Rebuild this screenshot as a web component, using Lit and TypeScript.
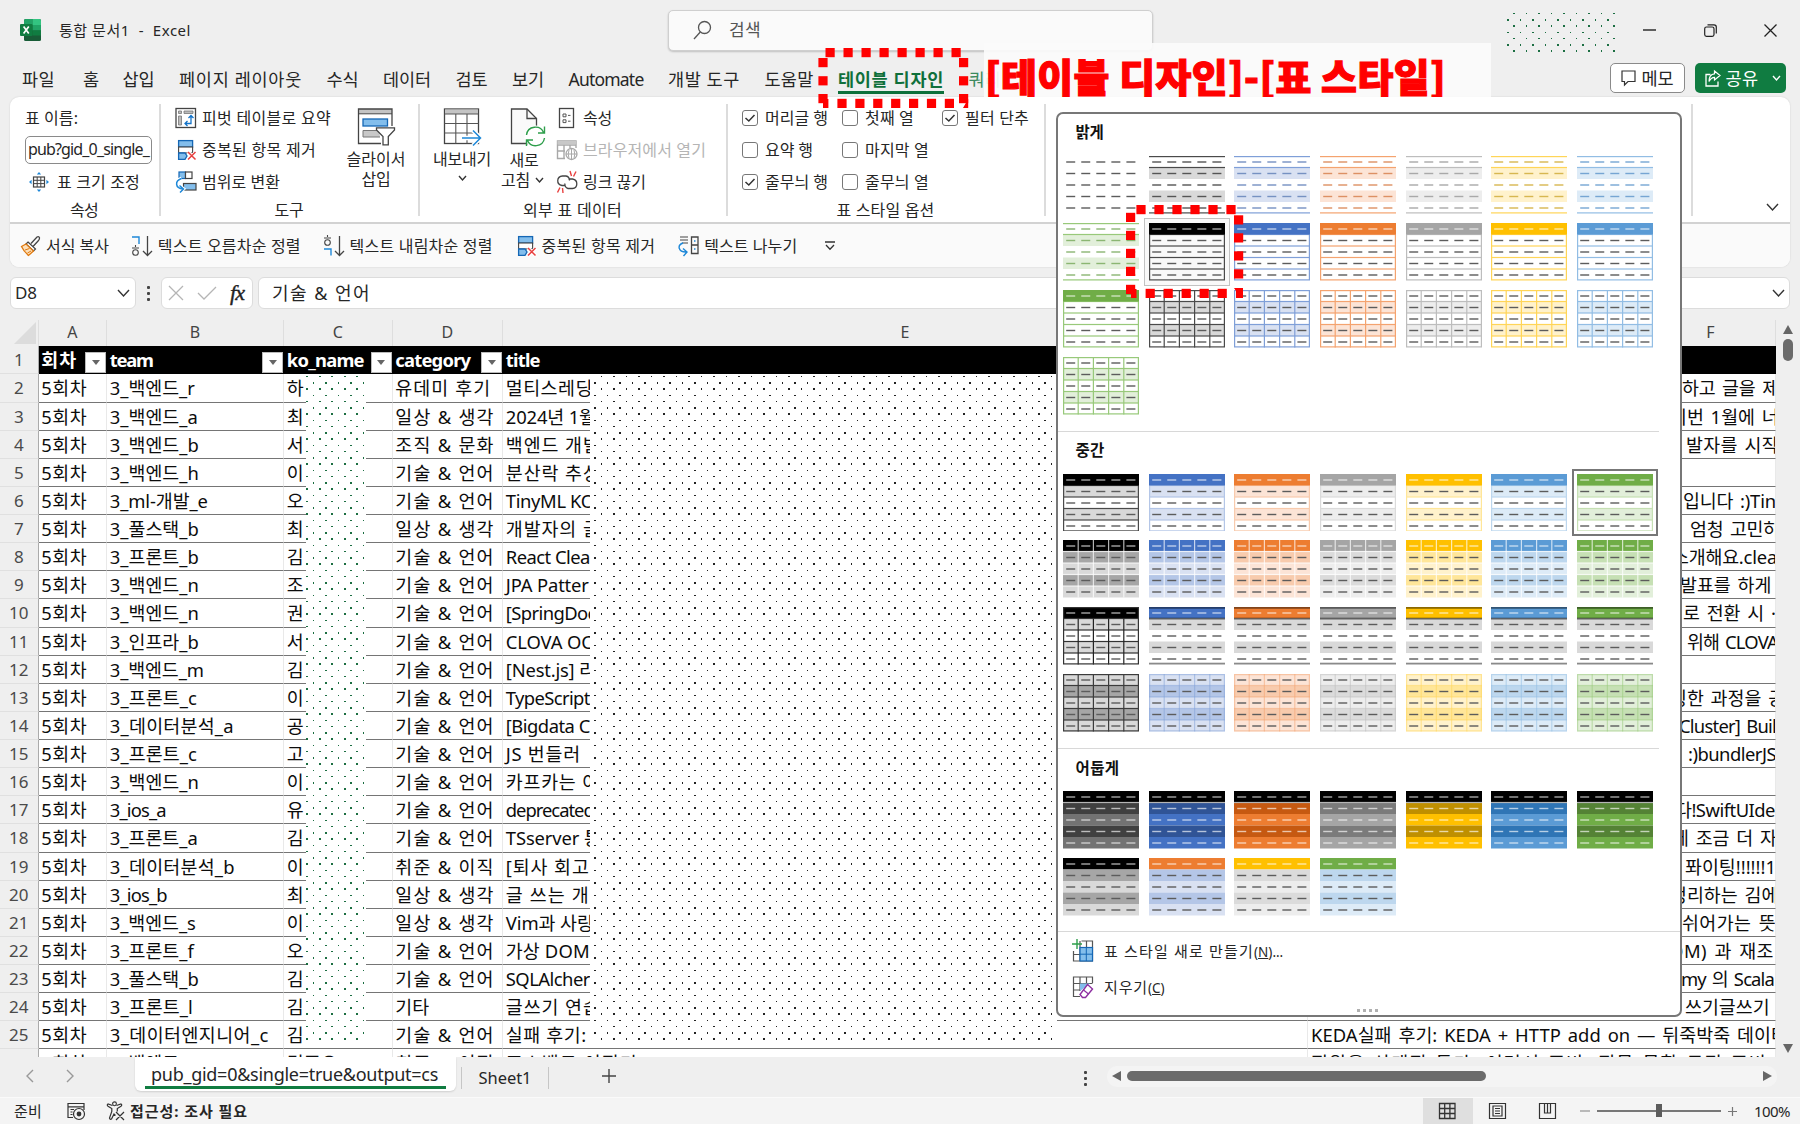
import { LitElement, html, svg, css, nothing } from "lit";
import { customElement } from "lit/decorators.js";
import { styleMap } from "lit/directives/style-map.js";

/* ---------- text helper: a span tracked to a given pixel width ---------- */
const t = (text: string, w = 0, cls = "") =>
  html`<span class="fit ${cls}" data-w=${w}>${text}</span>`;

/* ---------- sheet data ---------- */
type Row = [string, number, string, string, number, string, number, string, number, number?];
// team, width, name, category, width, title, width, overflow text, left edge, overflow width
const ROWS: Row[] = [
  ["3_백엔드_r", 85, "하", "유데미 후기", 96, "멀티스레딩", 87, "하고 글을 제", 1682, 97],
  ["3_백엔드_a", 88, "최", "일상 & 생각", 99.5, "2024년 1월", 90, "이번 1월에 너", 1670],
  ["3_백엔드_b", 89, "서", "조직 & 문화", 99.5, "백엔드 개발", 95, "발자를 시작", 1686, 93],
  ["3_백엔드_h", 89, "이", "기술 & 언어", 99.5, "분산락 추상", 95, "", 0],
  ["3_ml-개발_e", 98, "오", "기술 & 언어", 99.5, "TinyML KO", 89, "입니다 :)Tin", 1683, 93],
  ["3_풀스택_b", 89, "최", "일상 & 생각", 99.5, "개발자의 글", 95, "엄청 고민하", 1690, 90],
  ["3_프론트_b", 89, "김", "기술 & 언어", 99.5, "React Clea", 84, "소개해요.clea", 1672, 105],
  ["3_백엔드_n", 89, "조", "기술 & 언어", 99.5, "JPA Patter", 83, "발표를 하게", 1680],
  ["3_백엔드_n", 89, "권", "기술 & 언어", 99.5, "[SpringDoc", 90, "로 전환 시 ·", 1683],
  ["3_인프라_b", 89, "서", "기술 & 언어", 99.5, "CLOVA OC", 87, "위해 CLOVA", 1687, 91],
  ["3_백엔드_m", 94, "김", "기술 & 언어", 99.5, "[Nest.js] 리", 90, "", 0],
  ["3_프론트_c", 87, "이", "기술 & 언어", 99.5, "TypeScript", 84, "팅한 과정을 공", 1670],
  ["3_데이터분석_a", 124, "공", "기술 & 언어", 99.5, "[Bigdata C", 84, "Cluster] Buil", 1679, 97],
  ["3_프론트_c", 87, "고", "기술 & 언어", 99.5, "JS 번들러", 75, ":)bundlerJS", 1688, 88],
  ["3_백엔드_n", 89, "이", "기술 & 언어", 99.5, "카프카는 이", 94, "", 0],
  ["3_ios_a", 56, "유", "기술 & 언어", 99.5, "deprecated", 88, "다!SwiftUIde", 1675, 100],
  ["3_프론트_a", 88, "김", "기술 & 언어", 99.5, "TSserver 통", 95, "에 조금 더 자", 1672],
  ["3_데이터분석_b", 125, "이", "취준 & 이직", 99.5, "[퇴사 회고", 84, "퐈이팅!!!!!!1", 1685, 91],
  ["3_ios_b", 57, "최", "일상 & 생각", 99.5, "글 쓰는 개", 84, "정리하는 김에", 1670],
  ["3_백엔드_s", 86, "이", "일상 & 생각", 99.5, "Vim과 사랑", 88, "쉬어가는 뜻", 1682, 94],
  ["3_프론트_f", 84, "오", "기술 & 언어", 99.5, "가상 DOM", 84, "OM) 과 재조", 1669, 105],
  ["3_풀스택_b", 89, "김", "기술 & 언어", 99.5, "SQLAlcher", 84, "my 의 Scala", 1681, 93],
  ["3_프론트_l", 83, "김", "기타", 34, "글쓰기 연습", 95, "쓰기글쓰기", 1685],
  ["3_데이터엔지니어_c", 159, "김", "기술 & 언어", 99.5, "실패 후기:", 81, "KEDA실패 후기: KEDA + HTTP add on — 뒤죽박죽 데이터", 1311, 477],
  ["3_백엔드_r", 85, "김준오", "취준 & 이직", 99.5, "포스백드 이직기", 132, "직원을 상태집 특가, 이러서 준비, 직문 문학 긍정 준비,", 1311, 462],
];

/* ---------- table style thumbnails ---------- */
interface Thumb {
  kind: "plain" | "band" | "head" | "grid" | "midA" | "midB" | "midC" | "midD" | "dark" | "duo";
  c: string;   // accent
  l: string;   // line
  t1: string;  // light tint
  t2: string;  // stronger tint
  d: string;   // dash / deep shade
}
const BLACK = { c: "#000000", l: "#4a4a4a", t1: "#d9d9d9", t2: "#a6a6a6", d: "#555555" };
const BLUE = { c: "#4472c4", l: "#7f9fd8", t1: "#d9e1f2", t2: "#b4c6e7", d: "#7691c2" };
const ORANGE = { c: "#ed7d31", l: "#f4a36f", t1: "#fce4d6", t2: "#f8cbad", d: "#dd9063" };
const GRAY = { c: "#a5a5a5", l: "#bdbdbd", t1: "#ededed", t2: "#dbdbdb", d: "#a9a9a9" };
const GOLD = { c: "#ffc000", l: "#ffd558", t1: "#fff2cc", t2: "#ffe699", d: "#d7b750" };
const SKY = { c: "#5b9bd5", l: "#92bde4", t1: "#ddebf7", t2: "#bdd7ee", d: "#76a5d3" };
const GREEN = { c: "#70ad47", l: "#98c97a", t1: "#e2efda", t2: "#c6e0b4", d: "#8bb672" };
const ALL = [BLACK, BLUE, ORANGE, GRAY, GOLD, SKY, GREEN];
const DEEP = ["#404040", "#305496", "#c65911", "#7b7b7b", "#bf8f00", "#2f75b5", "#548235"];
const mk = (kind: Thumb["kind"], list: any[]): Thumb[] => list.map((p) => ({ kind, ...p }));

const LIGHT: Thumb[] = [
  { kind: "plain", ...BLACK }, ...mk("band", ALL), ...mk("head", ALL), ...mk("grid", ALL),
];
const MEDIUM: Thumb[] = [...mk("midA", ALL), ...mk("midB", ALL), ...mk("midC", ALL), ...mk("midD", ALL)];
const DARK: Thumb[] = [
  ...ALL.map((p, i) => ({ kind: "dark" as const, ...p, c: i ? p.c : "#737373", d: DEEP[i] })),
  { kind: "duo", ...BLACK }, { kind: "duo", ...BLUE, c: ORANGE.c }, { kind: "duo", ...GRAY, c: GOLD.c },
  { kind: "duo", ...SKY, c: GREEN.c },
];

const W = 76, H = 57.5, B = 11.5;
const rows = [0, 1, 2, 3, 4];
const band = (i: number, fill: string) => svg`<rect x="0" y=${i * B} width=${W} height=${B} fill=${fill} />`;
const hl = (y: number, s: string, w = 1.2) => svg`<rect x="0" y=${y - w / 2} width=${W} height=${w} fill=${s} />`;
const vl = (x: number, s: string, from = 0, w = 1.2) =>
  svg`<rect x=${x - w / 2} y=${from} width=${w} height=${H - from} fill=${s} />`;
const frame = (s: string) => svg`<rect x=".6" y=".6" width=${W - 1.2} height=${H - 1.2} fill="none" stroke=${s} stroke-width="1.2" />`;
const dash = (i: number, s: string) =>
  rows.map((k) => svg`<rect x=${3.2 + k * 15.05} y=${i * B + 5.3} width="9" height="1.4" fill=${s} />`);
const cuts = [15.2, 30.4, 45.6, 60.8];

function drawThumb(p: Thumb) {
  const D = "#5c5c5c", WH = "rgba(255,255,255,.65)", black = p.c === "#000000";
  switch (p.kind) {
    case "plain":
      return rows.map((i) => dash(i, D));
    case "band":
      return [band(1, p.t1), band(3, p.t1), hl(0.6, p.l), hl(B, p.l), hl(H - 0.6, p.l), rows.map((i) => dash(i, p.d))];
    case "head":
      return [band(0, p.c), [1, 2, 3, 4].map((i) => hl(i * B, p.l)), frame(p.l), band(0, p.c), dash(0, WH),
        [1, 2, 3, 4].map((i) => dash(i, D))];
    case "grid":
      return [band(1, p.t1), band(3, p.t1), [1, 2, 3, 4].map((i) => hl(i * B, p.l)), cuts.map((x) => vl(x, p.l)), frame(p.l),
        rows.map((i) => dash(i, D))];
    case "midA": {
      const l = black ? p.l : p.t2;
      return [band(1, p.t1), band(3, p.t1), [1, 2, 3, 4].map((i) => hl(i * B, l)), frame(l), band(0, p.c), dash(0, WH),
        [1, 2, 3, 4].map((i) => dash(i, D))];
    }
    case "midB":
      return [band(0, p.c), band(1, p.t2), band(2, p.t1), band(3, p.t2), band(4, p.t1),
        [1, 2, 3, 4].map((i) => hl(i * B, "rgba(255,255,255,.75)")), cuts.map((x) => vl(x, "rgba(255,255,255,.7)")),
        dash(0, WH), [1, 2, 3, 4].map((i) => dash(i, D))];
    case "midC":
      return [band(0, p.c), band(1, "#d9d9d9"), band(3, "#d9d9d9"),
        black ? [[1, 2, 3, 4].map((i) => hl(i * B, "#333")), cuts.map((x) => vl(x, "#222", B)), frame("#333")]
          : [hl(0.9, "rgba(0,0,0,.45)", 1.8), hl(B + 0.1, "rgba(0,0,0,.55)", 1.8), hl(H - 0.9, "#8a8a8a", 1.8)],
        dash(0, WH), [1, 2, 3, 4].map((i) => dash(i, D))];
    case "midD": {
      const l = black ? "#3c3c3c" : p.l + "80";
      return [band(0, p.t1), band(1, p.t2), band(2, p.t1), band(3, p.t2), band(4, p.t1),
        [1, 2, 3, 4].map((i) => hl(i * B, l)), cuts.map((x) => vl(x, l)), frame(l), rows.map((i) => dash(i, D))];
    }
    case "dark":
      return [band(1, p.d), band(2, p.c), band(3, p.d), band(4, p.c), band(0, "#000"), hl(B, "#b5b5b5"),
        rows.map((i) => dash(i, WH))];
    case "duo":
      return [band(0, p.c), band(1, p.t2), band(2, p.t1), band(3, p.t2), band(4, p.t1), dash(0, WH),
        [1, 2, 3, 4].map((i) => dash(i, D))];
  }
}

/* ---------- icons ---------- */
const ico = (w: number, h: number, body: unknown) =>
  html`<svg class="ico" width=${w} height=${h} viewBox="0 0 ${w} ${h}" fill="none">${body}</svg>`;
const chev = (w = 12, h = 7, c = "#333", sw = 1.4) =>
  ico(w, h, svg`<path d="M1 1L${w / 2} ${h - 1}L${w - 1} 1" stroke=${c} stroke-width=${sw} />`);

const I = {
  excel: ico(21, 22, svg`<rect x="4" y="0" width="17" height="22" rx="1.5" fill="#185c37"/><path d="M4 1.500Q4 0 5.500 0H12.500V6H4z" fill="#21a366"/><path d="M12.500 0H19.500Q21 0 21 1.500V6H12.500z" fill="#33c481"/><rect x="4" y="6" width="8.500" height="5.500" fill="#107c41"/><rect x="12.500" y="6" width="8.500" height="5.500" fill="#21a366"/><rect x="12.500" y="11.500" width="8.500" height="5" fill="#107c41"/><rect x="0" y="5" width="12.500" height="12" rx="1" fill="#107c41"/><path d="M3.600 7.500L8.800 14.500M8.800 7.500L3.600 14.500" stroke="#fff" stroke-width="1.700"/>`),
  search: ico(19, 20, svg`<circle cx="11.500" cy="7.500" r="6" stroke="#555" stroke-width="1.300"/><path d="M7.300 12L1 19" stroke="#555" stroke-width="1.300"/>`),
  resize: ico(20, 20, svg`<rect x="4.500" y="5" width="11" height="10" stroke="#444" stroke-width="1.200"/><path d="M4.500 8.300H15.500M4.500 11.600H15.500M8.200 5V15M11.800 5V15" stroke="#444"/><path d="M10 0L12.200 2.600H7.800zM10 20L12.200 17.400H7.800zM0 10L2.600 7.800V12.200zM20 10L17.400 7.800V12.200z" fill="#1e88d8"/>`),
  pivot: ico(22, 22, svg`<rect x="1" y="1.500" width="19.500" height="19" stroke="#444" stroke-width="1.300"/><path d="M3.500 4H6.500V6.500H3.500zM9 4H18V6.500H9zM3.500 9H6.500V18H3.500z" fill="#bbb" stroke="#777" stroke-width=".8"/><path d="M16 9V16.500H10.500M13.500 11L16 8.500L18.500 11M12.500 14L10 16.500L12.500 19" stroke="#1473c8" stroke-width="1.300"/>`),
  dedupe: ico(22, 22, svg`<rect x="3.600" y="1.600" width="14" height="6.500" fill="#83beec" stroke="#1567b5" stroke-width="1.300"/><rect x="3.600" y="8" width="14" height="6" fill="#fff" stroke="#444" stroke-width="1.100"/><path d="M3.600 14H10L12 17L10 20.400H3.600z" fill="#83beec" stroke="#1567b5" stroke-width="1.300"/><path d="M13 13L21 20.800M21 13L13 20.800" stroke="#fff" stroke-width="3.500"/><path d="M13 13L20.500 20.500M20.500 13L13 20.500" stroke="#e8403f" stroke-width="1.500"/>`),
  range: ico(22, 22, svg`<rect x="4" y="1" width="6.500" height="6.500" fill="#83beec" stroke="#1567b5" stroke-width="1.200"/><rect x="10.500" y="1" width="6.500" height="6.500" fill="#fff" stroke="#444" stroke-width="1.200"/><rect x="8.500" y="12.500" width="12.500" height="6.500" fill="#83beec" stroke="#444" stroke-width="1.200"/><path d="M6.500 7.500C0 10 0 16.500 7 18M4 14.500L8.500 18L5 21.500" stroke="#fff" stroke-width="3.500"/><path d="M6.500 7.500C-.5 10 0 17 8 18M4.500 14.500L8.500 18L5 21.500" stroke="#1e88d8" stroke-width="1.500"/>`),
  slicer: ico(39, 39, svg`<path d="M1.500 2H35V37H1.500z" fill="#fff"/><rect x="1.500" y="2" width="33.500" height="4.500" fill="#c4c4c4"/><path d="M35 19V2H1.500V36.500H24" stroke="#444" stroke-width="1.300"/><path d="M1.500 6.800H35" stroke="#444"/><rect x="6" y="12" width="24.500" height="7" fill="#83beec" stroke="#1567b5" stroke-width="1.300"/><path d="M22 23.500H6V30H23" fill="#c8c8c8" stroke="#777"/><path d="M19.500 20.800H37.500V23L31.300 29.500V37.800H26V29.500L19.500 23z" fill="#fff" stroke="#444" stroke-width="1.300"/>`),
  exportT: ico(39, 39, svg`<rect x="1.500" y="2" width="34" height="34.500" fill="#fff" stroke="#444" stroke-width="1.300"/><rect x="2" y="2.500" width="33" height="4.500" fill="#c4c4c4"/><path d="M1.500 7H35.500M1.500 16.500H35.500M1.500 26H35.500M12.800 7V36.500M24 7V36.500" stroke="#555" stroke-width="1.100"/><path d="M19 31H37M30 23.500L37.500 31L30 38.500" stroke="#fff" stroke-width="4.500"/><path d="M19 31H37M30 23.500L37.500 31L30 38.500" stroke="#1e88d8" stroke-width="1.500"/>`),
  refresh: ico(36, 39, svg`<path d="M1.500 2H17L26.500 11.500V36.500H1.500z" fill="#fafafa" stroke="#444" stroke-width="1.300"/><path d="M17 2V11.500H26.500" stroke="#444" stroke-width="1.300"/><circle cx="25.500" cy="29.500" r="11" fill="#fff"/><path d="M16.500 28C17.500 18.500 30.500 17.500 33.500 25.500M34.500 19.500V26H28M34.500 31C33 40.500 20.500 41 17.500 33.500M16.500 39V33H23" stroke="#2e9e4b" stroke-width="1.400"/>`),
  props: ico(22, 22, svg`<rect x="3.500" y="1.500" width="14" height="19" stroke="#444" stroke-width="1.300"/><path d="M7 7H10V9.800H7zM7 12.800H10V15.600H7zM12 8.400H14.500M12 14.200H14.500" stroke="#555"/>`),
  browser: ico(22, 22, svg`<path d="M9 19.500H1.500V2H20V9M1.500 6H20M1.500 12H9M8 6V19.500M14 6V9" stroke="#a8a8a8" stroke-width="1.400"/><rect x="1.500" y="2" width="18.500" height="3.500" fill="#c8c8c8"/><circle cx="15.500" cy="15" r="5.500" fill="#fff" stroke="#a8a8a8" stroke-width="1.300"/><path d="M10 15H21M15.500 9.500V20.500M13 11Q11.500 15 13 19.500M18 11Q19.500 15 18 19.500" stroke="#a8a8a8"/>`),
  unlink: ico(22, 24, svg`<path d="M9 15.500H6C0 14.500 .5 6.500 6.500 6H10C12.500 6.500 13.500 8 13.500 10.500M12.500 9H16.500C22.500 10 22 18 16.500 18.500H12C9.500 18 8.500 15.500 9 13.500" stroke="#444" stroke-width="1.300"/><path d="M14 1L15.500 6M20 1.500L17.500 6.500M4 17.500L1.500 22.500M6.500 18L7 23" stroke="#e8403f" stroke-width="1.400"/>`),
  brush: ico(22, 22, svg`<path d="M11 8.500L17 2Q19 1 19.500 3Q19.500 4.500 18.500 5.500L13 11.500" stroke="#444" stroke-width="1.300"/><path d="M8 7L15.500 14L13.500 16L6 9z" fill="#fff" stroke="#444" stroke-width="1.200"/><path d="M6 9L1.500 11.500Q3.500 16 8.500 20.500L13.500 16z" fill="#fce0bb" stroke="#e07a10" stroke-width="1.300"/><path d="M5 15L9.500 13.500M7.500 18L11 16" stroke="#e07a10"/>`),
  asc: ico(22, 22, svg`<path d="M0 2H7V9" stroke="#1e88d8" stroke-width="1.400"/><path d="M3.500 10V12M0 13H7" stroke="#444" stroke-width="1.100"/><circle cx="3.500" cy="17.500" r="2.800" stroke="#444" stroke-width="1.100"/><path d="M15.500 1V20.500M11 16L15.500 20.500L20 16" stroke="#444" stroke-width="1.300"/>`),
  desc: ico(22, 22, svg`<path d="M3.500 0V2M0 3H7" stroke="#444" stroke-width="1.100"/><circle cx="3.500" cy="7.500" r="2.800" stroke="#444" stroke-width="1.100"/><path d="M0 14H7V20.500" stroke="#1e88d8" stroke-width="1.400"/><path d="M15.500 1V20.500M11 16L15.500 20.500L20 16" stroke="#444" stroke-width="1.300"/>`),
  split: ico(22, 22, svg`<path d="M2 2H10M2 5H10M4 8H10" stroke="#444" stroke-width="1.200"/><path d="M13.500 2H20V18.500H13.500zM13.500 10H20" stroke="#444" stroke-width="1.300"/><path d="M16 6H17.500M16 14H17.500" stroke="#1e88d8" stroke-width="1.500"/><path d="M5 8C-1 10 0 17 8 17M5 13.500L9 17L5.500 21" stroke="#1e88d8" stroke-width="1.400"/>`),
  more: ico(12, 10, svg`<path d="M1 1H11M2 4L6 8.300L10 4" stroke="#333" stroke-width="1.300"/>`),
  memo: ico(15, 16, svg`<path d="M1 1H14V11.500H7L3.500 15V11.500H1z" stroke="#333" stroke-width="1.200"/>`),
  share: ico(16, 17, svg`<path d="M5.500 4.500H1V16H13V11.500" stroke="#fff" stroke-width="1.300"/><path d="M9.500 1L15 5.500L9.500 10V7.300Q6 7.300 4 11.500Q4 4.300 9.500 3.800z" stroke="#fff" stroke-width="1.200"/>`),
  newStyle: ico(22, 24, svg`<path d="M9.500 2H20.500V22H1.500V12M8 2V22M14.500 2V22M1.500 15.500H8M8 8.500H20.500" stroke="#555" stroke-width="1.200"/><rect x="8" y="8.500" width="12.500" height="13.500" fill="#83beec" stroke="#1567b5" stroke-width="1.200"/><path d="M14.300 8.500V22M8 15.200H20.500" stroke="#1567b5"/><path d="M5 0V10M0 5H10" stroke="#2e9e4b" stroke-width="1.400"/>`),
  clear: ico(22, 24, svg`<path d="M20.500 8V2H1.500V21.500H8M8 2V16M14.500 2V8M1.500 8.500H20.500M1.500 15H8" stroke="#555" stroke-width="1.200"/><path d="M8 16V8.500H18z" fill="#83beec"/><path d="M15.500 9.500L20.500 14L13.500 22.500H10.500L8 19.500z" fill="#fff" stroke="#8d2fa0" stroke-width="1.400"/><path d="M11.500 15L16.500 19" stroke="#8d2fa0" stroke-width="1.200"/>`),
  macro: ico(19, 19, svg`<path d="M17 8V1.500H1V15.500H6M1 4.800H17M3.500 7.500H7M3.500 10H5.500M3.500 12.500H5.500" stroke="#333" stroke-width="1.200"/><circle cx="12" cy="12" r="5.500" stroke="#333" stroke-width="1.200"/><circle cx="12" cy="12" r="2.400" fill="#333"/>`),
  access: ico(20, 20, svg`<circle cx="8.500" cy="2.800" r="1.900" stroke="#333" stroke-width="1.100"/><path d="M6.500 4.500L2 3Q.5 4 2 5.200L5.800 7.500V10.500L3.500 17Q4 19 5.500 18L8 13L9.500 14.500M10.500 4.500L15 3Q16.500 4 15 5.200L11.300 7.500V10.500M10 11L18 19M18 11L10 19" stroke="#333" stroke-width="1.200"/>`),
  viewGrid: ico(19, 18, svg`<path d="M1.500 1.500H17V16.500H1.500zM6.700 1.500V16.500M11.900 1.500V16.500M1.500 6.500H17M1.500 11.500H17" stroke="#333" stroke-width="1.300"/>`),
  viewPage: ico(19, 18, svg`<path d="M1.500 1.500H17.500V16.500H1.500zM5 4H14V14H5zM7 6.500H12M7 9H12M7 11.500H12" stroke="#333" stroke-width="1.200"/>`),
  viewBreak: ico(19, 18, svg`<path d="M1.500 1.500H17.500V16.500H1.500zM6.500 1.500V11H12.500V1.500M9.500 1.500V11" stroke="#333" stroke-width="1.200"/>`),
};

const check = (label: string, w: number, on: boolean) => html`<div class="check">
  <span class="box">${on ? ico(12, 10, svg`<path d="M1.500 5L4.800 8L10.500 2" stroke="#333" stroke-width="1.500"/>`) : nothing}</span>
  ${t(label, w)}</div>`;

/* staggered dots, two per 12.5px tile */
const dotField = (w: number, h: number, color: string, shift: number) => {
  const dots: unknown[] = [];
  for (let r = 0; 1 + r * 6.25 < h; r++) {
    const start = (shift + (r % 2) * 6.25) % 12.5;
    let d = "";
    for (let x = start; x < w; x += 12.5) d += `M${x.toFixed(2)} ${(1.6 + r * 6.25).toFixed(2)}h1.600`;
    dots.push(svg`<path d=${d} stroke=${color} stroke-width="1.600" shape-rendering="crispEdges" />`);
  }
  return html`<svg width=${w} height=${h}>${dots}</svg>`;
};

const TABS: [string, number][] = [["파일", 33], ["홈", 15], ["삽입", 32], ["페이지 레이아웃", 123], ["수식", 32], ["데이터", 48],
  ["검토", 32], ["보기", 32], ["Automate", 75], ["개발 도구", 72], ["도움말", 49]];

@customElement("app-root")
export class AppRoot extends LitElement {
  static styles = css`
    :host { display: block; position: relative; width: 1800px; height: 1125px; overflow: hidden; background: #efefef;
      color: #262626; font: 16px/20px "Noto Sans", "Noto Sans CJK KR", sans-serif; }
    * { box-sizing: border-box; }
    .ico { display: block; flex: none; overflow: visible; }
    .fit { display: inline-block; white-space: pre; }

    .title { display: flex; align-items: center; height: 60px; padding-left: 20px; }
    .title > * { flex: none; }
    .title .name { margin-left: 18px; width: 609px; font-size: 15px; }
    .search { display: flex; align-items: center; gap: 17px; width: 485px; height: 41px; padding-left: 24px; background: #fafafa;
      border: 1px solid #cfcfcf; border-radius: 5px; box-shadow: 0 1px 2px #0003; font-size: 17px; color: #555; }
    .wins { display: flex; align-items: center; gap: 47.500px; margin-left: 490px; }

    .tabs { display: flex; align-items: center; gap: 24.500px; height: 37px; padding: 0 14.500px 0 22px; font-size: 17.5px; }
    .tabs > * { flex: none; }
    .tabs > :nth-child(2) { margin-left: 3.500px; }
    .tabs .active { color: #0f703b; font-weight: 700; position: relative; }
    .tabs .active::after { content: ""; position: absolute; left: 0; right: 0; bottom: -5px; height: 3px; background: #0f703b; }
    .tabs .dim { color: #3b8a5e; }
    .tabs .memo, .tabs .share { display: flex; align-items: center; height: 30px; border-radius: 5px; margin-top: -1px; }
    .tabs .memo { margin-left: auto; width: 75px; gap: 6px; padding-left: 10px; border: 1px solid #8a8a8a; background: #fff; }
    .tabs .share { margin-left: -14.600px; width: 91px; gap: 5px; padding-left: 10px; background: #107c41; color: #fff; }
    .share .ico:last-child { margin-left: 8px; }

    .ribbon { margin: 0 10px; height: 170px; background: #fff; border-radius: 9px; overflow: hidden; box-shadow: 0 0 2px #0002; }
    .groups { display: flex; height: 127px; border-bottom: 2px solid #d2d2d2; }
    .group { display: grid; grid-template-rows: 97px 23px; padding-top: 5px; position: relative; flex: none; }
    .group::after { content: ""; position: absolute; right: 0; top: 7px; height: 112px; width: 2px; background: #dcdcdc; }
    .group .label { text-align: center; line-height: 23px; padding-right: 3px; }
    .g1 { width: 151px; } .g2 { width: 259px; } .g3 { width: 308px; } .g4 { width: 318px; } .g5 { width: 647px; }
    .last { flex: 1; display: flex; align-items: flex-end; padding: 0 0 11px 73px; }
    .stack { display: grid; grid-auto-rows: 32.200px; align-items: center; align-content: start; }
    .item { display: flex; align-items: center; gap: 5px; }
    .g1 .stack { padding-left: 15px; }
    .g1 .item { padding-left: 4px; gap: 8px; }
    .input { width: 127px; height: 28px; border: 1.5px solid #8a8a8a; border-radius: 5px; line-height: 25px; padding-left: 2px;
      overflow: hidden; background: #fff; }
    .body { display: flex; }
    .g2 .body { padding-left: 14px; }
    .g2 .stack { width: 160px; }
    .g3 .stack { padding-left: 4px; }
    .g3 .body { padding-left: 1px; }
    .big { display: flex; flex-direction: column; align-items: center; padding-top: 5px; width: 82px; flex: none; }
    .big .ico:first-child { margin-bottom: 3px; }
    .big .line { display: flex; align-items: center; gap: 5px; height: 20px; }
    .big.narrow { width: 46px; margin-right: 3px; }
    .big.narrow .ico:first-child { margin: 0 -2px 4px 2px; }
    .big.narrow .line { margin-left: -4px; }
    .big.narrow .line + .line { margin-left: -7px; }
    .off { color: #b5b5b5; }
    .g4 .body { display: grid; grid-template-columns: 100px 100px 100px; padding-left: 14px; }
    .check { display: flex; align-items: center; gap: 7px; white-space: nowrap; }
    .box { width: 16px; height: 16px; border: 1.3px solid #777; border-radius: 3px; background: #fff; display: grid; place-items: center; }
    .quick { display: flex; align-items: center; height: 44px; background: #fafafa; padding-left: 10px; }
    .quick .item { margin-right: 22.800px; gap: 4px; }
    .quick .item:last-child { padding-left: 4px; }

    .formula { display: flex; align-items: center; height: 53px; padding: 0 10px 1px; }
    .fbox { display: flex; align-items: center; height: 32px; background: #fff; border: 1px solid #dcdcdc; border-radius: 6px; }
    .namebox { width: 126px; justify-content: space-between; padding: 0 5px 0 4px; font-size: 17px; line-height: 22px; }
    .vdots { display: grid; gap: 3px; margin: 0 11px; }
    .vdots i { width: 3px; height: 3px; background: #444; border-radius: 1px; }
    .fx { width: 92px; padding: 0 8px 0 6px; justify-content: space-between; }
    .fx em { font: italic 400 22px/26px "Liberation Serif", serif; letter-spacing: -1px; color: #222; -webkit-text-stroke: .4px #222; }
    .fval { flex: 1; margin-left: 5px; padding: 0 4px 0 13px; justify-content: space-between; font-size: 18px; }

    .sheet { display: flex; height: 737px; }
    .grid { width: 1776px; overflow: hidden; position: relative; background: #fff; }
    .cols, .row { display: grid; grid-template-columns: 38.500px 68.500px 177px 108.500px 110.500px 805px 468px; }
    .cols { height: 26px; background: #efefef; font-size: 16px; line-height: 24px; text-align: center; color: #444; }
    .cols span { border-right: 1px solid #dedede; }
    .cols .corner svg { margin: 2px 0 0 14px; display: block; }
    .row { height: 28.13px; font-size: 18.4px; line-height: 27px; color: #0c0c0c; }
    .row > span { overflow: hidden; white-space: pre; padding-left: 2.800px; border-right: 1px solid #e9e9e9; border-bottom: 1.500px solid #757575; }
    .row > span.num { background: #efefef; color: #4a4a4a; text-align: center; padding: 0; font-size: 17px; border-right: 1px solid #ababab; border-bottom: 1px solid #e0e0e0; }
    .row > .f { word-spacing: 2px; }
    .row.head > span:not(.num) { background: #000; color: #fff; font-weight: 700; display: flex; justify-content: space-between; align-items: flex-end; border-color: #000; }
    .row.head { height: 28.400px; }
    .drop { width: 21px; height: 21px; background: #fff; border: 1px solid #bbb; display: grid; place-items: center; margin: 0; flex: none; }
    .drop::after { content: ""; border: 4px solid transparent; border-top: 5px solid #666; border-bottom: 0; }
    .mask { position: absolute; background: #fff; overflow: hidden; }
    .mask svg { display: block; }
    .m-name { left: 306px; top: 55px; width: 60px; height: 666px; }
    .m-title { left: 590px; top: 55px; width: 467px; height: 671px; }
    .vscroll { width: 24px; display: flex; flex-direction: column; align-items: center; padding: 5px 0 4px; }
    .vscroll .up { border: 5.500px solid transparent; border-top: 0; border-bottom: 9px solid #666; }
    .vscroll .thumb { margin-top: 5px; width: 10px; height: 22px; border-radius: 5px; background: #6b6b6b; }
    .vscroll .down { margin-top: auto; border: 5.500px solid transparent; border-bottom: 0; border-top: 9px solid #666; }

    .strip { display: flex; height: 41px; align-items: flex-start; border-bottom: 1px solid #fafafa; }
    .strip > * { flex: none; }
    .strip .nav { display: flex; gap: 32px; padding: 12px 0 0 26px; width: 135px; }
    .sheet-tab { width: 321px; height: 34px; background: #fff; border-radius: 0 0 6px 6px; padding: 4.500px 10px 0; box-shadow: 0 1px 2px #0002; font-size: 18px; line-height: 24px; text-align: center; }
    .sheet-tab .fit { display: block; width: 287px; margin-left: 6px; }
    .sheet-tab::after { content: ""; display: block; height: 3px; background: #107c41; margin-top: 0; }
    .strip .other { margin: 10px 0 0 5px; height: 22px; width: 88px; border: solid #c6c6c6; border-width: 0 1px; text-align: center; font-size: 16.5px; line-height: 22px; }
    .strip .plus { margin: 12px 0 0 53px; }
    .strip .vdots { margin: 14px 0 0 468px; }
    .hscroll { display: flex; align-items: center; width: 670px; height: 21px; margin: 8.500px 0 0 20px; border-radius: 10px; background: #f4f4f4; padding: 0 5px; }
    .hscroll .l { border: 5.500px solid transparent; border-left: 0; border-right: 9px solid #666; }
    .hscroll .thumb { margin-left: 6px; width: 359px; height: 10px; border-radius: 5px; background: #6b6b6b; }
    .hscroll .r { margin-left: auto; border: 5.500px solid transparent; border-right: 0; border-left: 9px solid #666; }

    .status { display: flex; align-items: center; height: 27px; padding: 0 10px 0 14px; background: #f4f4f4; font-size: 15px; border-bottom: 1px solid #fff; }
    .status .macro { margin: 0 20px 0 25px; }
    .status b { margin-left: 4px; }
    .views { display: flex; margin-left: auto; }
    .views span { width: 50px; height: 26px; display: grid; place-items: center; }
    .views .on { background: #dfdfdf; }
    .zoom { display: flex; align-items: center; gap: 7px; margin: 0 0 0 7px; }
    .zoom .track { width: 124px; height: 1.500px; background: #777; position: relative; }
    .zoom .track i { position: absolute; left: 59px; top: -6px; width: 6px; height: 13px; background: #5c5c5c; }
    .zoom .pct { margin-left: 10.500px; }

    .menu { position: absolute; left: 1056px; top: 112px; width: 626px; height: 905px; background: #fff; border: 2px solid #777;
      border-radius: 7px; display: flex; flex-direction: column; }
    .menu h3 { margin: 0; padding-left: 17.500px; font-size: 15.500px; line-height: 20px; color: #111; }
    .light { height: 317.500px; padding-top: 8px; width: 601px; border-bottom: 1.500px solid #d8d8d8; }
    .medium { height: 317.500px; padding-top: 8px; width: 601px; border-bottom: 1.500px solid #d8d8d8; }
    .darkest { height: 183px; padding-top: 8.500px; border-bottom: 1.500px solid #d8d8d8; }
    .thumbs { display: grid; grid-template-columns: repeat(7, 76px); column-gap: 9.650px; row-gap: 9.500px; padding: 14px 0 0 5px; }
    .medium .thumbs { row-gap: 9.400px; }
    .darkest .thumbs { padding-top: 13.500px; }
    .thumb { position: relative; height: 57.500px; }
    .thumb svg { display: block; position: relative; }
    .thumb.hot::before, .thumb.sel::before { content: ""; position: absolute; inset: -5px; background: #f9f9f9; border: 1.500px solid #c2c2c2; }
    .thumb.sel::before { border: 2px solid #777; background: #fff; }
    .cmd { display: flex; align-items: center; gap: 10px; height: 36px; padding-left: 14px; font-size: 15px; }
    .cmd small { font-size: 13.500px; }
    .darkest + .cmd { margin-top: 1px; }
    .grip { display: flex; gap: 3px; justify-content: center; margin: 4px 4px 0 0; }
    .grip i { width: 3px; height: 3px; background: #b0b0b0; }

    .avatar { position: absolute; left: 1507px; top: 12px; width: 108px; height: 40px; overflow: hidden; }
    .callout { position: absolute; left: 984px; top: 43px; width: 507px; height: 54px; background: rgba(251,251,251,.92); color: #f00; overflow: hidden; padding-left: 1px; }
    .callout .fit { font: 900 39px/69px "Noto Sans CJK KR", sans-serif; -webkit-text-stroke: 1.200px #f00; margin-top: -6px; transform: translateY(4px); display: block; }
    .marks { position: absolute; left: 0; top: 0; pointer-events: none; }
  `;

  private fitText() {
    this.renderRoot.querySelectorAll<HTMLElement>(".fit").forEach((el) => {
      const w = Number(el.dataset.w);
      if (!w) return;
      const range = document.createRange();
      range.selectNodeContents(el);
      el.style.letterSpacing = "0px";
      const n = [...(el.textContent ?? "")].length;
      el.style.letterSpacing = `${(w - range.getBoundingClientRect().width) / n}px`;
    });
  }
  protected firstUpdated() {
    this.fitText();
    document.fonts?.ready.then(() => this.fitText());
  }

  private thumb(p: Thumb, cls = "") {
    return html`<div class="thumb ${cls}"><svg width="76" height="57.500" viewBox="0 0 76 57.500">${drawThumb(p)}</svg></div>`;
  }

  private marks() {
    const sq = (x: number, y: number) => svg`<rect x=${x} y=${y} width="9.200" height="9.200" fill="#f00" />`;
    const out: unknown[] = [];
    for (let i = 0; i < 8; i++) out.push(sq(825.5 + i * 18, 48));
    for (let i = 0; i < 7; i++) out.push(sq(837.4 + i * 17.9, 98.8));
    for (const y of [58, 76.2, 94]) out.push(sq(818.4, y), sq(959, y));
    out.push(svg`<path d="M823 99H828.400V108H823zM968.200 99V108H963z" fill="#f00" />`);
    for (let i = 0; i < 6; i++) {
      out.push(sq(1136.4 + i * 18, 205));
      if (i < 5) out.push(sq(1145.6 + i * 18, 288.8));
    }
    for (let i = 0; i < 5; i++) {
      out.push(sq(1126, 212.8 + i * 18));
      if (i < 4) out.push(sq(1234, 215.3 + i * 18));
    }
    out.push(svg`<path d="M1131 289H1136.500V298H1131zM1234 288H1243V298H1236V291z" fill="#f00" />`);
    return out;
  }

  private row(r: Row, i: number) {
    return html`<div class="row">
      <span class="num">${i < 24 ? t(String(i + 2)) : ""}</span>
      <span>${t("5회차", 46)}</span><span>${t(r[0], r[1])}</span><span>${t(r[2])}</span>
      <span>${t(r[3], r[4])}</span><span>${t(r[5], r[6])}</span>
      <span class="f" style=${styleMap({ paddingLeft: r[8] ? `${r[8] - 1308}px` : "0" })}>${t(r[7], r[9] ?? 0)}</span>
    </div>`;
  }

  render() {
    return html`
      <div class="title">${I.excel}<span class="name">${t("통합 문서1  -  Excel", 132)}</span>
        <div class="search">${I.search}${t("검색", 32)}</div>
        <div class="wins">
          ${ico(13, 2, svg`<path d="M0 1H13" stroke="#222" stroke-width="1.400"/>`)}
          ${ico(13, 13, svg`<rect x=".7" y="3" width="9.300" height="9.300" rx="1.800" stroke="#222" stroke-width="1.200"/><path d="M3.500 .8H10Q12.300 .8 12.300 3V9.500" stroke="#222" stroke-width="1.200"/>`)}
          ${ico(13, 13, svg`<path d="M.5 .5L12.500 12.500M12.500 .5L.5 12.500" stroke="#222" stroke-width="1.300"/>`)}
        </div>
      </div>

      <div class="tabs">
        ${TABS.map(([s, w]) => t(s, w))}
        <span class="active">${t("테이블 디자인", 106)}</span><span class="dim">${t("쿼리", 32)}</span>
        <div class="memo">${I.memo}${t("메모", 32)}</div>
        <div class="share">${I.share}${t("공유", 33)}${chev(9, 6, "#fff")}</div>
      </div>

      <div class="ribbon">
        <div class="groups">
          <div class="group g1">
            <div class="stack">${t("표 이름:", 53)}
              <div class="input">${t("pub?gid_0_single_", 121)}</div>
              <div class="item">${I.resize}${t("표 크기 조정", 83)}</div></div>
            <div class="label">${t("속성", 28)}</div>
          </div>
          <div class="group g2">
            <div class="body">
              <div class="stack">
                <div class="item">${I.pivot}${t("피벗 테이블로 요약", 129)}</div>
                <div class="item">${I.dedupe}${t("중복된 항목 제거", 114)}</div>
                <div class="item">${I.range}${t("범위로 변환", 78)}</div></div>
              <div class="big">${I.slicer}<div class="line">${t("슬라이서", 59)}</div><div class="line">${t("삽입", 29)}</div></div>
            </div>
            <div class="label">${t("도구", 29)}</div>
          </div>
          <div class="group g3">
            <div class="body">
              <div class="big">${I.exportT}<div class="line">${t("내보내기", 58)}</div><div class="line">${chev(9, 6)}</div></div>
              <div class="big narrow">${I.refresh}<div class="line">${t("새로", 29)}</div><div class="line">${t("고침", 29)}${chev(9, 6)}</div></div>
              <div class="stack">
                <div class="item">${I.props}${t("속성", 29)}</div>
                <div class="item off">${I.browser}${t("브라우저에서 열기", 123)}</div>
                <div class="item">${I.unlink}${t("링크 끊기", 63)}</div></div>
            </div>
            <div class="label">${t("외부 표 데이터", 99)}</div>
          </div>
          <div class="group g4">
            <div class="body">
              <div class="stack">${check("머리글 행", 63, true)}${check("요약 행", 48, false)}${check("줄무늬 행", 63, true)}</div>
              <div class="stack">${check("첫째 열", 49, false)}${check("마지막 열", 64, false)}${check("줄무늬 열", 64, false)}</div>
              <div class="stack">${check("필터 단추", 64, true)}</div>
            </div>
            <div class="label">${t("표 스타일 옵션", 98)}</div>
          </div>
          <div class="group g5"></div>
          <div class="last">${chev(13, 8)}</div>
        </div>
        <div class="quick">
          <div class="item">${I.brush}${t("서식 복사", 63)}</div>
          <div class="item">${I.asc}${t("텍스트 오름차순 정렬", 143)}</div>
          <div class="item">${I.desc}${t("텍스트 내림차순 정렬", 143)}</div>
          <div class="item">${I.dedupe}${t("중복된 항목 제거", 114)}</div>
          <div class="item">${I.split}${t("텍스트 나누기", 93)}</div>
          <div class="item">${I.more}</div>
        </div>
      </div>

      <div class="formula">
        <div class="fbox namebox">${t("D8", 22)}${chev(13, 8)}</div>
        <div class="vdots"><i></i><i></i><i></i></div>
        <div class="fbox fx">
          ${ico(16, 16, svg`<path d="M1 1L15 15M15 1L1 15" stroke="#b5b5b5" stroke-width="1.300"/>`)}
          ${ico(20, 14, svg`<path d="M1 7L7 13L19 1" stroke="#b5b5b5" stroke-width="1.300"/>`)}
          <em>fx</em></div>
        <div class="fbox fval">${t("기술 & 언어", 99)}${chev(13, 8)}</div>
      </div>

      <div class="sheet">
        <div class="grid">
          <div class="cols"><span class="corner"><svg width="22" height="22"><path d="M22 0V22H0z" fill="#dcdcdc"/></svg></span>
            ${["A", "B", "C", "D", "E", "F"].map((c) => html`<span style=${styleMap(c === "F" ? { paddingLeft: "338px" } : {})}>${c}</span>`)}</div>
          <div class="row head"><span class="num">1</span>
            <span>${t("회차", 36)}<i class="drop"></i></span><span>${t("team", 43)}<i class="drop"></i></span>
            <span>${t("ko_name", 77)}<i class="drop"></i></span><span>${t("category", 75)}<i class="drop"></i></span>
            <span>${t("title", 34)}</span><span></span></div>
          ${ROWS.map((r, i) => this.row(r, i))}
          <div class="mask m-name">${dotField(60, 666, "#1c6e42", 0.4)}</div>
          <div class="mask m-title">${dotField(467, 667, "#222", 10.5)}</div>
        </div>
        <div class="vscroll"><i class="up"></i><i class="thumb"></i><i class="down"></i></div>
      </div>

      <div class="strip">
        <div class="nav">${ico(8, 14, svg`<path d="M7 1L1 7L7 13" stroke="#999" stroke-width="1.400"/>`)}${ico(8, 14, svg`<path d="M1 1L7 7L1 13" stroke="#999" stroke-width="1.400"/>`)}</div>
        <div class="sheet-tab">${t("pub_gid=0&single=true&output=cs", 287)}</div>
        <div class="other">${t("Sheet1", 53)}</div>
        <div class="plus">${ico(14, 14, svg`<path d="M7 0V14M0 7H14" stroke="#444" stroke-width="1.400"/>`)}</div>
        <div class="vdots"><i></i><i></i><i></i></div>
        <div class="hscroll"><i class="l"></i><i class="thumb"></i><i class="r"></i></div>
      </div>
      <div class="status">${t("준비", 28)}<span class="macro">${I.macro}</span>${I.access}<b>${t("접근성: 조사 필요", 118)}</b>
        <div class="views"><span class="on">${I.viewGrid}</span><span>${I.viewPage}</span><span>${I.viewBreak}</span></div>
        <div class="zoom">${ico(10, 2, svg`<path d="M0 1H10" stroke="#999" stroke-width="1.300"/>`)}<div class="track"><i></i></div>
          ${ico(9, 9, svg`<path d="M4.500 0V9M0 4.500H9" stroke="#777" stroke-width="1.200"/>`)}<span class="pct">${t("100%", 36)}</span></div>
      </div>

      <div class="menu">
        <div class="light"><h3>${t("밝게", 28)}</h3><div class="thumbs">
          ${LIGHT.map((p, i) => this.thumb(p, i === 8 ? "hot" : ""))}</div></div>
        <div class="medium"><h3>${t("중간", 29)}</h3><div class="thumbs">
          ${MEDIUM.map((p, i) => this.thumb(p, i === 6 ? "sel" : ""))}</div></div>
        <div class="darkest"><h3>${t("어둡게", 44)}</h3><div class="thumbs">${DARK.map((p) => this.thumb(p))}</div></div>
        <div class="cmd">${I.newStyle}<span>${t("표 스타일 새로 만들기", 150)}<small>(<u>N</u>)...</small></span></div>
        <div class="cmd">${I.clear}<span>${t("지우기", 44)}<small>(<u>C</u>)</small></span></div>
        <div class="grip"><i></i><i></i><i></i><i></i></div>
      </div>

      <div class="avatar">${dotField(108, 40, "#1c6e42", 6.25)}</div>
      <div class="callout">${t("[테이블 디자인]-[표 스타일]", 461)}</div>
      <svg class="marks" width="1800" height="1125">${this.marks()}</svg>
    `;
  }
}
